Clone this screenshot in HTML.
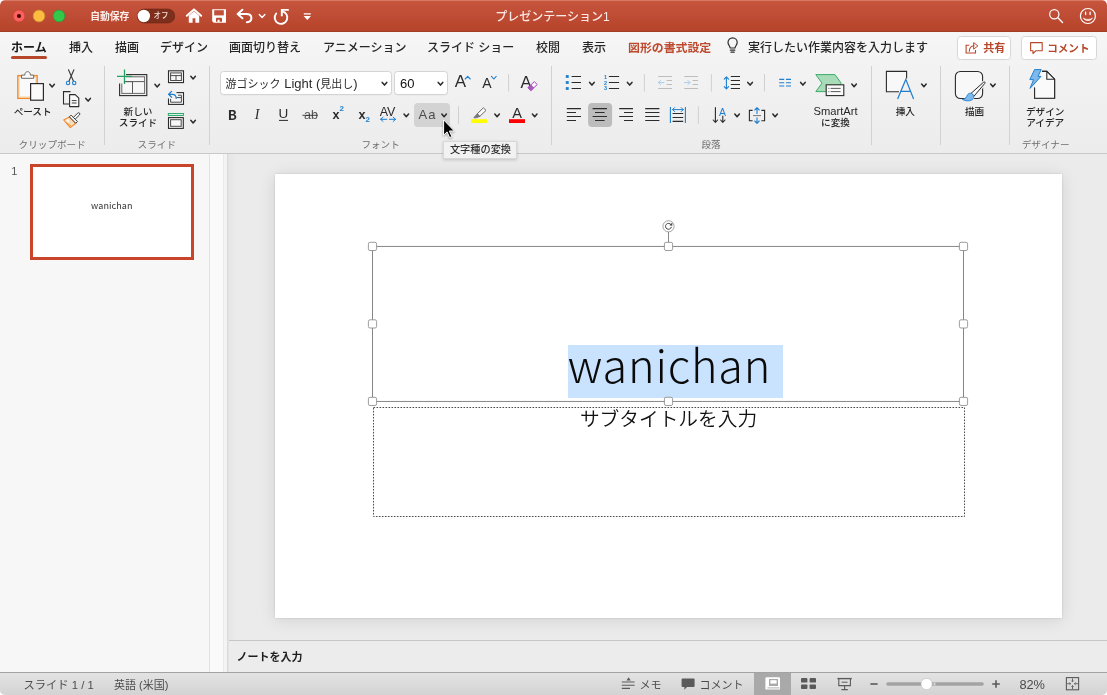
<!DOCTYPE html>
<html lang="ja">
<head>
<meta charset="utf-8">
<title>プレゼンテーション1</title>
<style>
*{box-sizing:border-box;margin:0;padding:0}
html,body{width:1107px;height:695px;overflow:hidden;background:#fff}
body{font-family:"Liberation Sans","Noto Sans CJK JP",sans-serif;color:#262626;position:relative}
.abs{position:absolute}
#app{will-change:transform;position:absolute;left:0;top:0;width:1107px;height:695px;overflow:hidden;background:#ececec;border-radius:5px}
/* title bar */
#titlebar{position:absolute;left:0;top:0;width:1107px;height:32px;background:linear-gradient(#dd9482 0,#c8553c 1.2px,#c5523a 4px,#b6442b 31px);border-radius:5px 5px 0 0;border-bottom:1px solid #a23c23}
.tl{position:absolute;top:10px;width:12px;height:12px;border-radius:50%}
#title{position:absolute;left:-1px;width:1107px;top:9.4px;text-align:center;color:#fae9e4;font-weight:500;font-size:12px;line-height:16px}
.tbtxt{position:absolute;color:#fbeeea;font-size:9.8px;line-height:14px;font-weight:700}
/* tabs */
#tabs{position:absolute;left:0;top:32px;width:1107px;height:30px;background:linear-gradient(#f6f6f6,#f3f3f3)}
.tab{position:absolute;top:8px;font-size:12px;line-height:16px;color:#262626;white-space:nowrap;font-weight:500}
/* ribbon */
#ribbon{position:absolute;left:0;top:62px;width:1107px;height:92px;background:linear-gradient(#f3f3f3,#ececec);border-bottom:1px solid #c9c9c9}
.sep{position:absolute;top:4px;width:1px;height:79px;background:#d2d2d2}
.glabel{position:absolute;top:77px;font-size:9.6px;line-height:12px;color:#6e6e6e;white-space:nowrap;transform:translateX(-50%)}
.blabel{position:absolute;font-size:9.6px;line-height:11px;color:#262626;font-weight:500;white-space:nowrap;text-align:center;transform:translateX(-50%)}
svg{position:absolute;overflow:visible}

.box{position:absolute;top:71px;height:23.5px;background:#fff;border:1px solid #d4d4d4;border-radius:3.5px;box-shadow:0 0.5px 0 rgba(0,0,0,.05)}
.ft{position:absolute;white-space:nowrap;color:#2b2b2b}
.hl{position:absolute;top:103px;height:24px;border-radius:4px}
/* panels */
#thumbs{position:absolute;left:0;top:154px;width:210px;height:518px;background:#f7f7f7;border-right:1px solid #e2e2e2}
#split{position:absolute;left:210px;top:154px;width:19px;height:518px;background:linear-gradient(90deg,#fafafa 0,#fafafa 13px,#ebebeb 13px,#ebebeb 14px,#f4f4f4 14px,#f4f4f4 17.5px,#dadada 17.5px,#dadada 18.5px,#e4e4e4 18.5px)}
#canvas{position:absolute;left:229px;top:154px;width:878px;height:486px;background:linear-gradient(90deg,#e6e6e6,#ebebeb 8px);overflow:hidden}
#slide{position:absolute;left:275px;top:174px;width:787px;height:444px;background:#fff;box-shadow:0 2px 16px rgba(0,0,0,.11),0 0 2px rgba(0,0,0,.14)}
#notes{position:absolute;left:229px;top:640px;width:878px;height:32px;background:#ececec;border-top:1px solid #c6c6c6}
#status{position:absolute;left:0;top:672px;width:1107px;height:23px;background:linear-gradient(#e3e3e3,#d3d3d3);border-top:1px solid #a2a2a2}
.st{position:absolute;top:5px;font-size:11px;line-height:14px;color:#4c4c4c;white-space:nowrap}
.handle{position:absolute;width:8px;height:8px;background:#fff;border:1px solid #7a7a7a;border-radius:1.5px}
</style>
</head>
<body>
<div id="app">

<!-- TITLEBAR -->
<div id="titlebar">
  <div class="tbtxt" style="left:90.2px;top:9.5px">自動保存</div>
    <div id="title">プレゼンテーション1</div>
</div>

<!-- TABS -->
<div id="tabs">
  <div class="tab" style="left:11px;font-weight:700;color:#1a1a1a">ホーム</div>
  <div class="abs" style="left:11px;top:24px;width:36px;height:3px;border-radius:2px;background:#b7472a"></div>
  <div class="tab" style="left:69px">挿入</div>
  <div class="tab" style="left:115px">描画</div>
  <div class="tab" style="left:160px">デザイン</div>
  <div class="tab" style="left:229px">画面切り替え</div>
  <div class="tab" style="left:323px">アニメーション</div>
  <div class="tab" style="left:427px">スライド ショー</div>
  <div class="tab" style="left:536px">校閲</div>
  <div class="tab" style="left:582px">表示</div>
  <div class="tab" style="left:628px;color:#bd4a2e;font-weight:700;font-size:11.9px">図形の書式設定</div>
  <div class="tab" style="left:748px">実行したい作業内容を入力します</div>
  <div class="abs" style="left:957px;top:4px;width:54px;height:24px;background:#fff;border:1px solid #d6d6d6;border-radius:3.5px"></div>
  <div class="abs" style="left:1021px;top:4px;width:76px;height:24px;background:#fff;border:1px solid #d6d6d6;border-radius:3.5px"></div>
  <div class="tab" style="left:983.2px;top:7.8px;font-size:11px;font-weight:700;color:#b7472a">共有</div>
  <div class="tab" style="left:1047.2px;top:7.9px;font-size:10.6px;font-weight:700;color:#b7472a">コメント</div>

</div>

<!-- RIBBON -->
<div id="ribbon">
  <div class="sep" style="left:104px"></div>
  <div class="sep" style="left:209px"></div>
  <div class="sep" style="left:551px"></div>
  <div class="sep" style="left:871px"></div>
  <div class="sep" style="left:940px"></div>
  <div class="sep" style="left:1009px"></div>
  <div class="glabel" style="left:52.2px">クリップボード</div>
  <div class="glabel" style="left:156.8px">スライド</div>
  <div class="glabel" style="left:380.6px">フォント</div>
  <div class="glabel" style="left:711px">段落</div>
  <div class="glabel" style="left:1045.6px">デザイナー</div>
</div>

<!-- RIBBON LABELS -->
<div id="rlabels">
  <div class="blabel" style="left:905.3px;top:106px">挿入</div>
  <div class="blabel" style="left:974.5px;top:106px">描画</div>
  <div class="blabel" style="left:1045.2px;top:106px">デザイン<br>アイデア</div>

  <div class="ft" style="left:604px;top:74px;font-size:5.5px;line-height:6px;font-weight:700;color:#1e7fd0">1</div>
  <div class="ft" style="left:604px;top:79.7px;font-size:5.5px;line-height:6px;font-weight:700;color:#1e7fd0">2</div>
  <div class="ft" style="left:604px;top:85.4px;font-size:5.5px;line-height:6px;font-weight:700;color:#1e7fd0">3</div>
  <div class="ft" style="left:719px;top:105.6px;font-size:10.5px;line-height:12px;color:#1e7fd0">A</div>
  <div class="blabel" style="left:835.5px;top:106px"><span style="font-size:11.2px;font-weight:400">SmartArt</span><br>に変換</div>

  <div class="box" style="left:220px;width:171.5px"></div>
  <div class="ft" style="left:225.6px;top:76px;font-size:11px;line-height:16px">游ゴシック<span style="font-size:13px"> Light (</span>見出し<span style="font-size:13px">)</span></div>
  <div class="box" style="left:394px;width:53.5px"></div>
  <div class="ft" style="left:400px;top:76px;font-size:13px;line-height:16px;color:#111">60</div>
  <div class="ft" style="left:454.8px;top:73.4px;font-size:17px;line-height:18px">A</div>
  <div class="ft" style="left:482.2px;top:75.8px;font-size:14px;line-height:14px">A</div>
  <div class="ft" style="left:520.6px;top:72.6px;font-size:16.5px;line-height:18px">A</div>
  <div class="ft" style="left:227.8px;top:103.9px;font-size:13.4px;line-height:20px;font-weight:700;font-family:'Noto Sans CJK JP','Liberation Sans',sans-serif">B</div>
  <div class="ft" style="left:254.8px;top:107px;font-size:14px;line-height:16px;font-style:italic;font-family:'Liberation Serif',serif">I</div>
  <div class="ft" style="left:278.6px;top:106px;font-size:13.5px;line-height:16px">U</div>
  <div class="ft" style="left:304px;top:106.8px;font-size:12.5px;line-height:16px;color:#555">ab</div>
  <div class="ft" style="left:332.6px;top:106.6px;font-size:12.6px;line-height:16px;font-weight:700">x</div>
  <div class="ft" style="left:339.6px;top:104px;font-size:8px;line-height:9px;font-weight:700;color:#1e7fd0">2</div>
  <div class="ft" style="left:358.6px;top:106.6px;font-size:12.6px;line-height:16px;font-weight:700">x</div>
  <div class="ft" style="left:365.6px;top:115px;font-size:8px;line-height:9px;font-weight:700;color:#1e7fd0">2</div>
  <div class="ft" style="left:379.8px;top:104.6px;font-size:12.5px;line-height:14px;letter-spacing:-0.3px">AV</div>
  <div class="hl" style="left:414.2px;width:36px;background:#d3d3d3"></div>
  <div class="ft" style="left:418.4px;top:106.6px;font-size:13px;line-height:16px;letter-spacing:1.2px;color:#4a4a4a">Aa</div>
  <div class="ft" style="left:512.2px;top:104.6px;font-size:14.6px;line-height:16px">A</div>

  <div class="blabel" style="left:32.6px;top:106px">ペースト</div>
  <div class="blabel" style="left:138px;top:105.5px">新しい<br>スライド</div>
</div>

<!-- PANELS -->
<div id="thumbs">
  <div class="abs" style="left:11.3px;top:9.6px;font-size:11px;line-height:14px;color:#555">1</div>
  <div class="abs" style="left:30px;top:10px;width:164px;height:96px;background:#fff;border:3px solid #c9442b"></div>
  <div class="abs" style="left:61.8px;width:100px;top:46px;text-align:center;font-size:9px;line-height:12px;color:#333;font-family:'Noto Sans CJK JP','Liberation Sans',sans-serif;font-weight:400;letter-spacing:0.1px">wanichan</div>
</div>
<div id="split"></div>
<div id="canvas"></div>
<div id="slide">
  <div class="abs" id="sel" style="left:293.4px;top:170.8px;width:214.2px;height:53.4px;background:#c9e3ff"></div>
  <div class="abs" id="ttl" style="left:1px;top:153.6px;width:787px;text-align:center;font-family:'Noto Sans CJK JP','Liberation Sans',sans-serif;font-weight:300;font-size:45px;letter-spacing:0.8px;line-height:72px;color:#0a0a0a;white-space:nowrap"><span id="ttlspan">wanichan</span></div>
  <div class="abs" id="sub" style="left:0;top:229px;width:787px;text-align:center;font-family:'Noto Sans CJK JP',sans-serif;font-weight:350;font-size:19.7px;line-height:30px;color:#111;white-space:nowrap"><span id="subspan">サブタイトルを入力</span></div>
</div>
<div id="notes"><div class="abs" style="left:7.4px;top:9.4px;font-size:11px;line-height:15px;font-weight:700;color:#1e1e1e">ノートを入力</div></div>
<div id="status">
  <div class="st" style="left:23.4px;font-size:11.3px">スライド 1 / 1</div>
  <div class="st" style="left:114px">英語 (米国)</div>
  <div class="st" style="left:639.6px;font-size:11px">メモ</div>
  <div class="st" style="left:699.6px;font-size:11px">コメント</div>
  <div class="abs" style="left:754px;top:0;width:37px;height:22px;background:#a9a9a9"></div>
  <div class="st" style="left:1019.4px;font-size:12.8px">82%</div>
</div>

<!-- ICONS -->
<svg id="icons" width="1107" height="695" viewBox="0 0 1107 695" style="left:0;top:0;pointer-events:none">
<!-- paste -->
<rect x="17.8" y="75.6" width="19.4" height="22.8" fill="#fbe3c0" stroke="#f08a2e" stroke-width="1.3"/>
<rect x="20" y="77.8" width="15" height="18.4" fill="#fafafa"/>
<path d="M21.5 78.3v-3.2h3.3c0-4.6 5.6-4.6 5.6 0h3.3v3.2z" fill="#fafafa" stroke="#6a6a6a" stroke-width="1"/>
<rect x="30.6" y="83.6" width="12.8" height="16.6" fill="#fafafa" stroke="#2b2b2b" stroke-width="1.2"/>
<path d="M49.8 84.2l2.3 2.7l2.3 -2.7" fill="none" stroke="#2b2b2b" stroke-width="1.5" stroke-linecap="round" stroke-linejoin="round"/>
<!-- scissors -->
<path d="M68.5 69.8l5 11.4M73.9 69.8l-5 11.4" fill="none" stroke="#3a3a3a" stroke-width="1.1" stroke-linecap="round"/>
<circle cx="68" cy="83" r="1.7" fill="none" stroke="#1e7fd0" stroke-width="1.1"/><circle cx="74.2" cy="83" r="1.7" fill="none" stroke="#1e7fd0" stroke-width="1.1"/>
<!-- copy -->
<path d="M69.5 104h-6v-12.4h7l0 0" fill="none" stroke="#2b2b2b" stroke-width="1.1"/>
<path d="M69.6 94.6h5.6l3.6 3.6v8.4h-9.2z" fill="#fafafa" stroke="#2b2b2b" stroke-width="1.1" stroke-linejoin="round"/>
<path d="M71.8 100.6h4.8M71.8 103h4.8" stroke="#2b2b2b" stroke-width="0.9"/>
<path d="M85.8 98.4l2.3 2.7l2.3 -2.7" fill="none" stroke="#2b2b2b" stroke-width="1.5" stroke-linecap="round" stroke-linejoin="round"/>
<!-- format painter -->
<path d="M69.4 116.9L63.7 120l6.6 7.6 5.4-4.3z" fill="#fbdcb8" stroke="#f08a2e" stroke-width="1.1" stroke-linejoin="round"/>
<path d="M68.6 118.6l-2.6 1.6 3 3.4z" fill="#fff" opacity=".8"/>
<path d="M66.4 122.6l4.6 3.4" stroke="#f08a2e" stroke-width="0.9"/>
<path d="M71.05 115.15l6.4 6.4-1.7 1.7-6.4-6.4z" fill="#fafafa" stroke="#3a3a3a" stroke-width="1" stroke-linejoin="round"/>
<path d="M73.4 117.4l4.3-4.3c1.2-1.2 3 .6 1.8 1.8l-4.3 4.3z" fill="#fafafa" stroke="#3a3a3a" stroke-width="1" stroke-linejoin="round"/>
<!-- new slide -->
<rect x="119.6" y="74.6" width="27.2" height="21" fill="none" stroke="#2b2b2b" stroke-width="1.1"/>
<rect x="121.8" y="76.8" width="22.8" height="16.6" fill="#f7f7f7" stroke="#6a6a6a" stroke-width="1"/>
<path d="M124.5 81.6h20M132.5 81.6v11.8" stroke="#5a5a5a" stroke-width="1" fill="none"/>
<rect x="117" y="74" width="9" height="9.5" fill="#f1f1f1" stroke="none"/>
<path d="M117 76.4h15M124.5 69.4v14.6" stroke="#21a366" stroke-width="1.3" fill="none"/>
<path d="M124.5 81.6h8M132.5 81.6" stroke="#5a5a5a" stroke-width="1" fill="none"/>
<path d="M154.9 84.2l2.3 2.7l2.3 -2.7" fill="none" stroke="#2b2b2b" stroke-width="1.5" stroke-linecap="round" stroke-linejoin="round"/>
<!-- layout -->
<rect x="168.5" y="70.8" width="15" height="11.8" fill="#f7f7f7" stroke="#2b2b2b" stroke-width="1.1"/>
<rect x="170.6" y="72.9" width="10.8" height="7.6" fill="none" stroke="#4a4a4a" stroke-width="1"/>
<path d="M170.6 75.6h10.8M176 75.6v4.9" stroke="#4a4a4a" stroke-width="1"/>
<path d="M190.8 76.2l2.3 2.7l2.3 -2.7" fill="none" stroke="#2b2b2b" stroke-width="1.5" stroke-linecap="round" stroke-linejoin="round"/>
<!-- reset -->
<rect x="168.5" y="92.6" width="15" height="11.8" fill="#f7f7f7" stroke="#2b2b2b" stroke-width="1.1"/>
<path d="M178 95.2h3.4v7h-10.8v-3.4" fill="none" stroke="#4a4a4a" stroke-width="1"/>
<path d="M176 97.6h5.4" stroke="#4a4a4a" stroke-width="1"/>
<rect x="166.5" y="90.5" width="10" height="8" fill="#f0f0f0"/>
<path d="M171.6 91.4l-3 2.9 3 2.9M168.8 94.3h3.6c2.6 0 3.8 1.6 3.8 4.2" fill="none" stroke="#1e7fd0" stroke-width="1.2" stroke-linecap="round" stroke-linejoin="round"/>
<!-- section -->
<rect x="168.3" y="113.5" width="15.2" height="2" fill="#d9f0e2" stroke="#21a366" stroke-width="0.9"/>
<rect x="168.5" y="117.6" width="14.8" height="10.8" fill="#f7f7f7" stroke="#2b2b2b" stroke-width="1.1"/>
<rect x="170.6" y="119.7" width="10.6" height="6.6" fill="none" stroke="#4a4a4a" stroke-width="1"/>
<path d="M190.8 120.2l2.3 2.7l2.3 -2.7" fill="none" stroke="#2b2b2b" stroke-width="1.5" stroke-linecap="round" stroke-linejoin="round"/>
<!-- font box chevrons -->
<path d="M382.2 82.4l2.3 2.7l2.3 -2.7" fill="none" stroke="#2b2b2b" stroke-width="1.5" stroke-linecap="round" stroke-linejoin="round"/>
<path d="M438.2 82.4l2.3 2.7l2.3 -2.7" fill="none" stroke="#2b2b2b" stroke-width="1.5" stroke-linecap="round" stroke-linejoin="round"/>
<!-- grow/shrink font carets -->
<path d="M465.2 79l2.5-2.6 2.5 2.6" fill="none" stroke="#1e7fd0" stroke-width="1.1" stroke-linecap="round" stroke-linejoin="round"/>
<path d="M491.4 76.4l2.4 2.6 2.4-2.6" fill="none" stroke="#1e7fd0" stroke-width="1.1" stroke-linecap="round" stroke-linejoin="round"/>
<path d="M508.6 74.2v17.4M458.5 106.2v17.6" stroke="#d0d0d0" stroke-width="1"/>
<!-- clear formatting eraser -->
<path d="M528 87.6l6.4-6 2.8 3-6.4 6z" fill="#faf4fc" stroke="#a24bb5" stroke-width="1" stroke-linejoin="round"/>
<path d="M528 87.6l2.9-2.7 2.8 3-2.9 2.7z" fill="#a85bbb" stroke="#a24bb5" stroke-width="0.8" stroke-linejoin="round"/>
<!-- strike line / underline -->
<path d="M302.4 115.3h15.4" stroke="#2b2b2b" stroke-width="0.9"/>
<path d="M279 120.4h9" stroke="#2b2b2b" stroke-width="1"/>
<!-- AV arrow -->
<path d="M380.6 119.3h6.2M389.4 119.3h6.2M383 117.2l-2.4 2.1 2.4 2.1M393.2 117.2l2.4 2.1-2.4 2.1" fill="none" stroke="#1e7fd0" stroke-width="1" stroke-linecap="round" stroke-linejoin="round"/>
<path d="M404.0 114.0l2.3 2.7l2.3 -2.7" fill="none" stroke="#2b2b2b" stroke-width="1.5" stroke-linecap="round" stroke-linejoin="round"/>
<path d="M441.8 114.0l2.3 2.7l2.3 -2.7" fill="none" stroke="#2b2b2b" stroke-width="1.5" stroke-linecap="round" stroke-linejoin="round"/>
<!-- highlighter -->
<rect x="471" y="119.2" width="16" height="3.8" fill="#ffff00"/>
<path d="M477.2 113.8l6.2-6 2.6 2.6-6.2 6z" fill="#fafafa" stroke="#6a6a6a" stroke-width="1" stroke-linejoin="round"/>
<path d="M477.2 113.8l2.6 2.6-3.4 1.4h-2.6z" fill="#7a7a7a" stroke="#6a6a6a" stroke-width="0.8" stroke-linejoin="round"/>
<path d="M494.8 114.0l2.3 2.7l2.3 -2.7" fill="none" stroke="#2b2b2b" stroke-width="1.5" stroke-linecap="round" stroke-linejoin="round"/>
<rect x="509" y="119.2" width="16" height="3.8" fill="#ff0000"/>
<path d="M532.4 114.0l2.3 2.7l2.3 -2.7" fill="none" stroke="#2b2b2b" stroke-width="1.5" stroke-linecap="round" stroke-linejoin="round"/>
<!-- bullets -->
<rect x="565.8" y="75.1" width="2.9" height="2.8" fill="#1e7fd0"/>
<rect x="565.8" y="81.1" width="2.9" height="2.8" fill="#1e7fd0"/>
<rect x="565.8" y="87.1" width="2.9" height="2.8" fill="#1e7fd0"/>
<path d="M571.6 76.5H581M571.6 82.5H581M571.6 88.5H581" stroke="#2b2b2b" stroke-width="1.2" fill="none"/>
<path d="M589.6 82.4l2.3 2.7l2.3 -2.7" fill="none" stroke="#2b2b2b" stroke-width="1.5" stroke-linecap="round" stroke-linejoin="round"/>
<!-- numbering -->
<path d="M608.9 76.5H619.1M608.9 82.5H619.1M608.9 88.5H619.1" stroke="#2b2b2b" stroke-width="1.2" fill="none"/>
<path d="M627.4 82.4l2.3 2.7l2.3 -2.7" fill="none" stroke="#2b2b2b" stroke-width="1.5" stroke-linecap="round" stroke-linejoin="round"/>
<path d="M644.4 74.2v17.4M711.4 74.2v17.4M764.5 74.2v17.4M698.4 106.2v17.6" stroke="#d0d0d0" stroke-width="1"/>
<!-- indent dec/inc (disabled) -->
<path d="M658.2 76.5H672M666.6 80.5H672M666.6 84.5H672M658.2 88.5H672" stroke="#bdbdbd" stroke-width="1" fill="none"/>
<path d="M658.4 82.6h5.6M660.6 80.4l-2.2 2.2 2.2 2.2" fill="none" stroke="#a9cdea" stroke-width="1" stroke-linecap="round" stroke-linejoin="round"/>
<path d="M684.2 76.5H698M692.6 80.5H698M692.6 84.5H698M684.2 88.5H698" stroke="#bdbdbd" stroke-width="1" fill="none"/>
<path d="M684.4 82.6h5.6M687.8 80.4l2.2 2.2-2.2 2.2" fill="none" stroke="#a9cdea" stroke-width="1" stroke-linecap="round" stroke-linejoin="round"/>
<!-- line spacing -->
<path d="M726.4 77v11.8M724.2 79.2l2.2-2.4 2.2 2.4M724.2 86.6l2.2 2.4 2.2-2.4" fill="none" stroke="#1e7fd0" stroke-width="1.1" stroke-linecap="round" stroke-linejoin="round"/>
<path d="M730.8 76.5H740M730.8 80.5H740M730.8 84.5H740M730.8 88.5H740" stroke="#2b2b2b" stroke-width="1.2" fill="none"/>
<path d="M747.8 82.4l2.3 2.7l2.3 -2.7" fill="none" stroke="#2b2b2b" stroke-width="1.5" stroke-linecap="round" stroke-linejoin="round"/>
<!-- columns -->
<path d="M779.2 79.4H784.2M779.2 82.7H784.2M779.2 86H784.2M786 79.4H791M786 82.7H791M786 86H791" stroke="#1e7fd0" stroke-width="1.1" fill="none"/>
<path d="M800.6 82.4l2.3 2.7l2.3 -2.7" fill="none" stroke="#2b2b2b" stroke-width="1.5" stroke-linecap="round" stroke-linejoin="round"/>
<!-- smartart -->
<path d="M815.8 74.6h19.2l6.2 8.6-6.2 8.4h-19.2l6.2-8.4z" fill="#a8dcb8" stroke="#3cae6a" stroke-width="1" stroke-linejoin="round"/>
<rect x="826.2" y="84.8" width="17.6" height="10.8" fill="#fafafa" stroke="#2b2b2b" stroke-width="1.1"/>
<path d="M830.6 88.4h10M830.6 91.6h10" stroke="#4a4a4a" stroke-width="0.9"/><path d="M828.4 88.4h1M828.4 91.6h1" stroke="#4a4a4a" stroke-width="0.9"/>
<path d="M851.8 84.0l2.3 2.7l2.3 -2.7" fill="none" stroke="#2b2b2b" stroke-width="1.5" stroke-linecap="round" stroke-linejoin="round"/>
<!-- align row -->
<path d="M566.8 108.6H581M566.8 112.5H576M566.8 116.5H581M566.8 120.5H576" stroke="#2b2b2b" stroke-width="1.2" fill="none"/>
<rect x="588.1" y="103" width="24" height="24" rx="4" fill="#bcbcbc"/>
<path d="M592.6 108.6H607M595 112.5H604.6M592.6 116.5H607M595 120.5H604.6" stroke="#2b2b2b" stroke-width="1.2" fill="none"/>
<path d="M619.2 108.6H633M624 112.5H633M619.2 116.5H633M624 120.5H633" stroke="#2b2b2b" stroke-width="1.2" fill="none"/>
<path d="M645.2 108.6H659.4M645.2 112.5H659.4M645.2 116.5H659.4M645.2 120.5H659.4" stroke="#2b2b2b" stroke-width="1.2" fill="none"/>
<!-- distribute -->
<path d="M670.4 107v16M685.4 107v16" stroke="#1e7fd0" stroke-width="1.1"/>
<path d="M672.6 109.6h10.6M674.6 107.6l-2 2 2 2M681.2 107.6l2 2-2 2" fill="none" stroke="#1e7fd0" stroke-width="1" stroke-linecap="round" stroke-linejoin="round"/>
<path d="M672.6 113.5H683.2M672.6 117.5H683.2M672.6 121.4H683.2" stroke="#2b2b2b" stroke-width="1.2" fill="none"/>
<!-- text direction -->
<path d="M715.4 107.6v14.6M713.2 120l2.2 2.4 2.2-2.4M722.8 116v6.2M720.6 120l2.2 2.4 2.2-2.4" fill="none" stroke="#2b2b2b" stroke-width="1.1" stroke-linecap="round" stroke-linejoin="round"/>
<path d="M734.8 114.0l2.3 2.7l2.3 -2.7" fill="none" stroke="#2b2b2b" stroke-width="1.5" stroke-linecap="round" stroke-linejoin="round"/>
<!-- align text -->
<path d="M752.6 110.4h-3.2v10.4h3.2M761.4 110.4h3.2v10.4h-3.2" fill="none" stroke="#2b2b2b" stroke-width="1.1"/>
<path d="M753 115.6h8" stroke="#6a6a6a" stroke-width="0.9"/>
<path d="M757 108v5.4M754.8 110l2.2-2.3 2.2 2.3M757 117.8v5.2M754.8 121l2.2 2.3 2.2-2.3" fill="none" stroke="#1e7fd0" stroke-width="1.1" stroke-linecap="round" stroke-linejoin="round"/>
<path d="M772.8 114.0l2.3 2.7l2.3 -2.7" fill="none" stroke="#2b2b2b" stroke-width="1.5" stroke-linecap="round" stroke-linejoin="round"/>
<!-- insert textbox -->
<path d="M899 91.7H886.4V71.4H906.6V78.4" fill="#f8f8f8" stroke="#2b2b2b" stroke-width="1.1"/>
<path d="M897.6 99L905.8 79.4L913.6 99M900.6 91.3h10.2" fill="none" stroke="#1e7fd0" stroke-width="1.2" stroke-linejoin="miter"/>
<path d="M921.6 84.1l2.3 2.7l2.3 -2.7" fill="none" stroke="#2b2b2b" stroke-width="1.5" stroke-linecap="round" stroke-linejoin="round"/>
<!-- draw -->
<rect x="955.4" y="71.5" width="27.2" height="27" rx="5" fill="#f8f8f8" stroke="#2b2b2b" stroke-width="1.1"/>
<path d="M969 97l12-13.4 3.6-2.4 0.6 0.8-1.8 3.6-11.4 13.6z" fill="#f0f0f0" stroke="#f0f0f0" stroke-width="2.4"/>
<path d="M970.8 93.6L983.6 82.2c1-0.8 1.8 0 1.2 1.2L973.8 96.4z" fill="#fafafa" stroke="#2b2b2b" stroke-width="1" stroke-linejoin="round"/>
<path d="M962.4 99.4c3.4-0.4 4-2.4 5-4.4 1.4-2.2 4-2.2 5.6-0.6 1.4 1.6 1 4.2-1.4 5.6-2.6 1.4-6.4 1-9.2-0.6z" fill="#7fb9ec" stroke="#1e7fd0" stroke-width="0.9" stroke-linejoin="round"/>
<path d="M990.6 84.1l2.3 2.7l2.3 -2.7" fill="none" stroke="#2b2b2b" stroke-width="1.5" stroke-linecap="round" stroke-linejoin="round"/>
<!-- design ideas -->
<path d="M1042 71.4h4.8l7.8 7.8v19H1034.6V87.6" fill="#fafafa" stroke="#2b2b2b" stroke-width="1.1" stroke-linejoin="miter"/>
<path d="M1042.2 71.4h4.6l7.8 7.8v19h-20v-10.6z" fill="#fafafa" stroke="none"/>
<path d="M1042 71.4h4.8l7.8 7.8v19H1034.6V87.6M1046.8 71.4v7.8h7.8" fill="none" stroke="#2b2b2b" stroke-width="1.1"/>
<path d="M1034.6 69.6h6.6l-3.2 6.8h3l-11 12 3.6-8.8h-3.8z" fill="#7fb9ec" stroke="#1e7fd0" stroke-width="1" stroke-linejoin="miter"/>
<!-- lightbulb -->
<path d="M730.2 48c0-1.8-2.2-3-2.2-5.6a4.6 4.6 0 0 1 9.2 0c0 2.6-2.2 3.8-2.2 5.6zM730.4 50.2h4.4M731 52.2h3.2" fill="none" stroke="#2b2b2b" stroke-width="1.2" stroke-linecap="round" stroke-linejoin="round"/>
<!-- share icon -->
<path d="M969.4 45.2H966.1V53H975.5V50" fill="none" stroke="#b7472a" stroke-width="1.1" stroke-linejoin="miter"/>
<path d="M969.3 51.2c0.2-3.4 1.8-5.2 4.6-5.4" fill="none" stroke="#b7472a" stroke-width="1.1" stroke-linecap="round"/>
<path d="M973.7 42.6l4.2 3.3-4.2 3.3z" fill="none" stroke="#b7472a" stroke-width="1" stroke-linejoin="round"/>
<!-- comment icon -->
<path d="M1030.6 42.6h11.6v8.2h-6.4l-2.8 2.7v-2.7h-2.4z" fill="none" stroke="#b7472a" stroke-width="1.1" stroke-linejoin="round"/>
<!-- traffic lights -->
<circle cx="19" cy="16" r="5.9" fill="#fc625d" stroke="#c9443c" stroke-width="0.8"/><circle cx="19" cy="16" r="2" fill="#4c0102"/>
<circle cx="39" cy="16" r="5.9" fill="#fdbc40" stroke="#c8912e" stroke-width="0.8"/>
<circle cx="59" cy="16" r="5.9" fill="#34c84a" stroke="#2a9a38" stroke-width="0.8"/>
<!-- toggle -->
<rect x="137.2" y="9" width="37.6" height="14" rx="7" fill="#7d2f1c" stroke="#6b2715" stroke-width="0.6"/>
<circle cx="143.8" cy="16" r="6.2" fill="#fff"/>
<!-- home -->
<path d="M186.8 15.8l7.2-6.4 7.2 6.4" fill="none" stroke="#ffffff" stroke-width="2" stroke-linecap="round" stroke-linejoin="round"/>
<path d="M188.8 15.8l5.2-4.6 5.2 4.6v6.9h-3.8v-4.5h-2.8v4.5h-3.8z" fill="#ffffff"/>
<!-- save -->
<path d="M212.2 9.2h13.8v13.6h-12.2l-1.6-1.6z" fill="#ffffff"/>
<rect x="214.2" y="10.2" width="9.6" height="5.2" fill="#c0503a"/>
<path d="M216 21.7v-2.6c0-.8.5-1.3 1.3-1.3h3.4c.8 0 1.3.5 1.3 1.3v2.6h-2.4v-2h-2v2z" fill="#bb4a33"/>
<!-- undo -->
<path d="M242.4 9.7l-4.8 4.3 4.8 4.3M238 14h8.4c3.2 0 5 1.8 5 4.1s-1.8 4.1-4.6 4.2" fill="none" stroke="#ffffff" stroke-width="2" stroke-linecap="round" stroke-linejoin="round"/>
<path d="M259.3 14.6l2.8 3 2.8-3" fill="none" stroke="#ffffff" stroke-width="1.4" stroke-linecap="round" stroke-linejoin="round"/>
<!-- redo / repeat -->
<path d="M282.4 11.4A6.3 6.3 0 1 1 276.2 13.5" fill="none" stroke="#ffffff" stroke-width="1.9" stroke-linecap="round"/>
<path d="M288.8 9.9H281.8V16.2" fill="none" stroke="#ffffff" stroke-width="1.9" stroke-linecap="butt" stroke-linejoin="miter"/>
<!-- customize -->
<path d="M303.8 13.9h7" stroke="#ffffff" stroke-width="1.3"/><path d="M303.6 16.1h7.4l-3.7 3.9z" fill="#ffffff"/>
<!-- search -->
<circle cx="1054.3" cy="14.3" r="4.6" fill="none" stroke="#ffffff" stroke-width="1.2"/><path d="M1057.7 17.6l4.8 4.8" stroke="#ffffff" stroke-width="1.4" stroke-linecap="round"/>
<!-- smiley -->
<circle cx="1087.9" cy="16" r="7.5" fill="none" stroke="#ffffff" stroke-width="1.2"/>
<path d="M1085.6 12.2v2.4M1090.1 12.2v2.4" stroke="#ffffff" stroke-width="1.3" stroke-linecap="round"/>
<path d="M1083.4 17.9c1.6 3.6 7.4 3.6 9 0c-2.4 2-6.6 2-9 0z" fill="#ffffff" stroke="#ffffff" stroke-width="0.6" stroke-linejoin="round"/>
<!-- title box -->
<rect x="372.5" y="246.4" width="591" height="155" fill="none" stroke="#7a7a7a" stroke-width="0.9"/>
<path d="M668.5 232v11" stroke="#7a7a7a" stroke-width="0.9"/>
<!-- subtitle dashed -->
<rect x="373.5" y="407.5" width="591" height="109" fill="none" stroke="#4a4a4a" stroke-width="1" stroke-dasharray="1.6 1.4"/>
<!-- handles -->
<rect x="368.4" y="242.3" width="8.2" height="8.2" rx="1.6" fill="#fff" stroke="#858585" stroke-width="0.8"/>
<rect x="368.4" y="319.8" width="8.2" height="8.2" rx="1.6" fill="#fff" stroke="#858585" stroke-width="0.8"/>
<rect x="368.4" y="397.3" width="8.2" height="8.2" rx="1.6" fill="#fff" stroke="#858585" stroke-width="0.8"/>
<rect x="664.4" y="242.3" width="8.2" height="8.2" rx="1.6" fill="#fff" stroke="#858585" stroke-width="0.8"/>
<rect x="664.4" y="397.3" width="8.2" height="8.2" rx="1.6" fill="#fff" stroke="#858585" stroke-width="0.8"/>
<rect x="959.4" y="242.3" width="8.2" height="8.2" rx="1.6" fill="#fff" stroke="#858585" stroke-width="0.8"/>
<rect x="959.4" y="319.8" width="8.2" height="8.2" rx="1.6" fill="#fff" stroke="#858585" stroke-width="0.8"/>
<rect x="959.4" y="397.3" width="8.2" height="8.2" rx="1.6" fill="#fff" stroke="#858585" stroke-width="0.8"/>
<!-- rotate handle -->
<circle cx="668.5" cy="226.3" r="5.6" fill="#fff" stroke="#8a8a8a" stroke-width="0.8"/>
<path d="M671 224.6a3 3 0 1 0 0.4 2.6" fill="none" stroke="#444" stroke-width="1" stroke-linecap="round"/>
<path d="M672.3 222.6v2.8h-2.8z" fill="#444"/>
<!-- cursor -->
<path d="M443.6 119.8v15.4l3.5-3.3 2.5 5.7 2.3-1-2.5-5.6h4.9z" fill="#000" stroke="#fff" stroke-width="1" stroke-linejoin="round" style="filter:drop-shadow(0 1px 1px rgba(0,0,0,.35))"/>
<!-- notes icon -->
<path d="M626.4 680.4l2.2-3.2 2.2 3.2z" fill="#5a5a5a"/>
<path d="M621.8 682h12.8M621.8 685.2h12.8M621.8 688.4h8.2" stroke="#5a5a5a" stroke-width="1.1"/>
<!-- comment icon -->
<path d="M682.6 678.6h11a1 1 0 0 1 1 1v6.4a1 1 0 0 1-1 1h-6.6l-2.6 2.8v-2.8h-1.8a1 1 0 0 1-1-1v-6.4a1 1 0 0 1 1-1z" fill="#5a5a5a"/>
<!-- normal view -->
<rect x="765.4" y="677.2" width="14.6" height="12.4" rx="1.2" fill="#fff"/>
<rect x="769" y="679" width="9" height="7" fill="#a9a9a9"/><rect x="770.4" y="680.2" width="6.2" height="3.4" fill="#fff"/>
<path d="M767.4 687.9h12" stroke="#a9a9a9" stroke-width="0.9"/>
<!-- grid view -->
<rect x="801" y="678" width="6.4" height="4.6" rx="0.9" fill="#5a5a5a"/>
<rect x="801" y="684.4" width="6.4" height="4.6" rx="0.9" fill="#5a5a5a"/>
<rect x="809.6" y="678" width="6.4" height="4.6" rx="0.9" fill="#5a5a5a"/>
<rect x="809.6" y="684.4" width="6.4" height="4.6" rx="0.9" fill="#5a5a5a"/>
<!-- presenter -->
<path d="M837.4 678.6h14.4" stroke="#5a5a5a" stroke-width="1.4"/>
<path d="M838.8 679v6.6h11.6V679" fill="none" stroke="#5a5a5a" stroke-width="1.1"/>
<path d="M841.6 682.2h6" stroke="#5a5a5a" stroke-width="1"/>
<path d="M844.6 685.6v3.6M841.4 689.6h6.4" stroke="#5a5a5a" stroke-width="1.1"/>
<!-- zoom slider -->
<path d="M870.4 684h7.2" stroke="#5a5a5a" stroke-width="1.6"/>
<rect x="886.2" y="682.2" width="97.6" height="3.6" rx="1.8" fill="#a3a3a3"/>
<rect x="933.6" y="682.6" width="1.8" height="2.8" fill="#d6d6d6"/>
<circle cx="926.6" cy="684" r="5.6" fill="#fff" stroke="#c2c2c2" stroke-width="0.6"/>
<path d="M992.2 684h7.6M996 680.2v7.6" stroke="#5a5a5a" stroke-width="1.6"/>
<!-- fit -->
<rect x="1066.4" y="677.6" width="12.2" height="12.2" fill="none" stroke="#5a5a5a" stroke-width="1.1"/>
<path d="M1072.5 678.4v3.4M1072.5 689v-3.4M1067.2 683.7h3.4M1077.8 683.7h-3.4" stroke="#5a5a5a" stroke-width="0.9"/>
<path d="M1071.3 680.6l1.2 1.3 1.2-1.3M1071.3 686.8l1.2-1.3 1.2 1.3M1069.4 682.5l1.3 1.2-1.3 1.2M1075.6 682.5l-1.3 1.2 1.3 1.2" fill="none" stroke="#5a5a5a" stroke-width="0.8"/>
</svg>
<div class="tbtxt" style="left:153.6px;top:11px;font-size:7.5px;line-height:10px;font-weight:500;color:#f3ddd6">オフ</div>
<div class="abs" id="tip" style="left:443.4px;top:140.6px;width:74px;height:18.4px;background:#f2f2f2;border:0.5px solid #d8d8d8;box-shadow:0 1px 3px rgba(0,0,0,.18)"></div>
<div class="abs" style="left:444px;top:143.8px;width:73px;text-align:center;font-size:10.2px;line-height:12px;color:#2e2e2e;font-weight:500;white-space:nowrap">文字種の変換</div>

</div>
</body>
</html>
